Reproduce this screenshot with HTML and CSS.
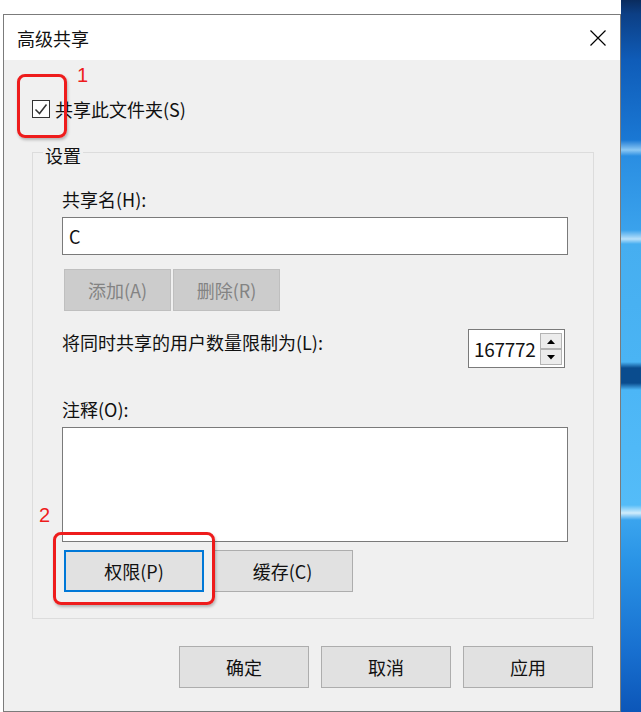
FILE: index.html
```html
<!DOCTYPE html>
<html lang="zh-CN">
<head>
<meta charset="utf-8">
<title>高级共享</title>
<link rel="stylesheet" href="styles.css">
</head>
<body>
<div class="screen">
  <div class="desk">
    <div class="dialog">
      <div class="titlebar">
        <span class="title">高级共享</span>
        <svg class="close" width="16" height="16" viewBox="0 0 16 16"><path d="M0.5 0.5 L15.5 15.5 M15.5 0.5 L0.5 15.5" stroke="#000" stroke-width="1.2" fill="none"/></svg>
      </div>
      <div class="body">
        <div class="share-row">
          <span class="checkbox"><svg width="16" height="16" viewBox="0 0 16 16"><path d="M2.5 8.5 L6.5 12.5 L13.5 3.5" stroke="#333" stroke-width="1.5" fill="none"/></svg></span>
          <span class="text">共享此文件夹(S)</span>
        </div>
        <fieldset class="group">
          <legend class="legend">设置</legend>
          <div class="group-body">
            <div class="label first">共享名(H):</div>
            <div class="textbox">C</div>
            <div class="btn-row">
              <div class="btn disabled w107">添加(A)</div>
              <div class="btn disabled w107">删除(R)</div>
            </div>
            <div class="limit-row">
              <span class="limit-text">将同时共享的用户数量限制为(L):</span>
              <div class="spinner">
                <span class="spin-value">167772</span>
                <div class="spin-btns">
                  <span class="spin-btn"><svg width="8" height="5" viewBox="0 0 8 5"><polygon points="0,5 4,0.5 8,5" fill="#000"/></svg></span>
                  <span class="spin-btn"><svg width="8" height="5" viewBox="0 0 8 5"><polygon points="0,0 4,4.5 8,0" fill="#000"/></svg></span>
                </div>
              </div>
            </div>
            <div class="label comment">注释(O):</div>
            <div class="textarea"></div>
            <div class="btn-row perm">
              <div class="btn focused w140">权限(P)</div>
              <div class="btn w141">缓存(C)</div>
            </div>
          </div>
        </fieldset>
        <div class="footer">
          <div class="btn w130">确定</div>
          <div class="btn w130">取消</div>
          <div class="btn w130">应用</div>
        </div>
        <div class="mark box1"></div>
        <div class="mark-num n1">1</div>
        <div class="mark-num n2">2</div>
        <div class="mark box2"></div>
      </div>
    </div>
  </div>
  <div class="wallpaper"></div>
</div>
</body>
</html>
```

FILE: styles.css
```css
html, body {
  margin: 0;
  padding: 0;
}
body {
  background: #ffffff;
  font-family: "Noto Sans CJK SC", "Noto Sans", sans-serif;
  font-size: 18px;
  color: #111;
  height: 712px;
  overflow: hidden;
}
.screen {
  display: flex;
  height: 712px;
}
.desk {
  width: 621px;
  flex: none;
  box-sizing: border-box;
  padding: 14px 0 0 3px;
}
.dialog {
  width: 618px;
  height: 698px;
  box-sizing: border-box;
  border: 1px solid #7b7b7b;
  display: flex;
  flex-direction: column;
}
.titlebar {
  height: 45px;
  flex: none;
  background: #fff;
  display: flex;
  align-items: center;
  justify-content: space-between;
  padding: 0 14px 0 13px;
}
.title {
  line-height: 24px;
}
.close {
  display: block;
}
.body {
  flex: 1;
  background: #f0f0f0;
  position: relative;
  padding: 37px 26px 0 28px;
}
.share-row {
  display: flex;
  align-items: center;
  height: 24px;
  gap: 5px;
}
.checkbox {
  width: 18px;
  height: 18px;
  box-sizing: border-box;
  border: 1px solid #333;
  background: #fff;
  display: flex;
}
.text {
  line-height: 24px;
}
.group {
  margin: 19px 0 0;
  padding: 0;
  border: 1px solid #dcdcdc;
  min-width: 0;
}
.legend {
  margin-left: 10px;
  padding: 6px 2px 0;
  line-height: 18px;
}
.group-body {
  padding: 0 25px 26px 29px;
}
.label {
  line-height: 24px;
}
.label.first {
  margin-top: 23px;
}
.label.comment {
  margin-top: 29px;
}
.textbox {
  margin-top: 6px;
  height: 38px;
  box-sizing: border-box;
  border: 1px solid #7a7a7a;
  background: #fff;
  display: flex;
  align-items: center;
  padding-left: 6px;
}
.textarea {
  margin-top: 6px;
  height: 115px;
  box-sizing: border-box;
  border: 1px solid #7a7a7a;
  background: #fff;
}
.btn-row {
  display: flex;
  gap: 2px;
  margin-top: 14px;
  padding-left: 2px;
}
.btn-row.perm {
  margin-top: 8px;
  gap: 8px;
}
.btn {
  height: 42px;
  box-sizing: border-box;
  border: 1px solid #adadad;
  background: #e1e1e1;
  display: flex;
  align-items: center;
  justify-content: center;
  line-height: 24px;
}
.btn.disabled {
  background: #cccccc;
  border-color: #bfbfbf;
  color: #838383;
}
.btn.focused {
  border: 2px solid #0078d7;
}
.w107 { width: 107px; }
.w140 { width: 140px; }
.w141 { width: 141px; }
.w130 { width: 130px; }
.limit-row {
  display: flex;
  align-items: flex-start;
  margin-top: 18px;
}
.limit-text {
  margin-top: 1px;
  line-height: 24px;
}
.spinner {
  margin-left: auto;
  margin-right: 3px;
  width: 97px;
  height: 39px;
  box-sizing: border-box;
  border: 1px solid #7a7a7a;
  background: #fff;
  display: flex;
}
.spin-value {
  flex: 1;
  padding-left: 5px;
  line-height: 37px;
  font-size: 19px;
  letter-spacing: -0.3px;
}
.spin-btns {
  width: 22px;
  padding: 3px 2px 2px 1px;
  display: flex;
  flex-direction: column;
}
.spin-btn {
  flex: 1;
  box-sizing: border-box;
  border: 1px solid #b4b4b4;
  background: #ececec;
  display: flex;
  align-items: center;
  justify-content: center;
}
.spin-btn svg {
  display: block;
}
.footer {
  display: flex;
  justify-content: flex-end;
  gap: 12px;
  margin-top: 27px;
  padding-right: 1px;
}
.mark {
  position: absolute;
  box-sizing: border-box;
  border: 3px solid #ee1c1c;
  border-radius: 8px;
  box-shadow: 1px 2px 3px rgba(0, 0, 0, 0.25);
}
.box1 {
  left: 13px;
  top: 14px;
  width: 50px;
  height: 64px;
}
.box2 {
  left: 49px;
  top: 472px;
  width: 162px;
  height: 73px;
}
.mark-num {
  position: absolute;
  font-family: "Liberation Sans", Arial, sans-serif;
  font-size: 20px;
  line-height: 20px;
  color: #ee1c1c;
}
.n1 {
  left: 73px;
  top: 5px;
}
.n2 {
  left: 35px;
  top: 445px;
}
.wallpaper {
  flex: none;
  width: 20px;
  height: 712px;
  background: linear-gradient(to bottom,
    #0a2c5e 0px, #0c3f85 14px, #0f5cb8 60px, #1a78d4 140px,
    #8cc8f4 150px, #2a8ee2 156px, #3aa2ec 230px, #b8e0fa 239px,
    #46aef0 244px, #4ab4f4 362px, #0a4c8e 368px, #0a4c8e 383px,
    #4cb6f6 390px, #54bcf8 505px, #d0ecfc 513px, #3aa4ee 520px,
    #2a94e6 560px, #1870d0 650px, #0c56b8 712px);
}
```
